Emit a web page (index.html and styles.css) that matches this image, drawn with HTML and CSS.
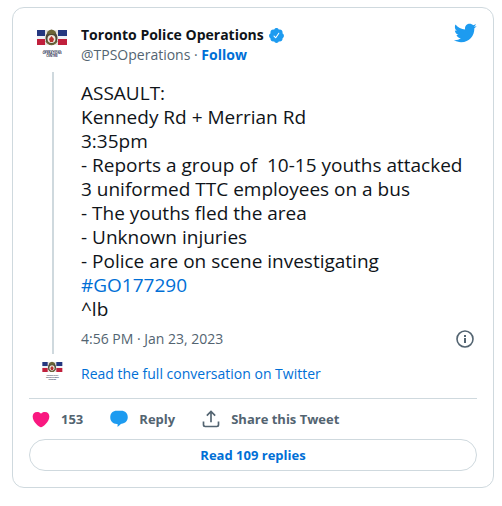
FILE: index.html
```html
<!DOCTYPE html>
<html lang="en">
<head>
  <meta charset="UTF-8" />
  <meta name="viewport" content="width=device-width, initial-scale=1.0" />
  <title>Toronto Police Operations on Twitter</title>
  <link rel="stylesheet" href="styles.css">
</head>
<body>

  <article class="tweet">
    <div class="thread">
      <div class="rail">
        <svg class="avatar" viewBox="0 0 48 48">
          <rect x="8" y="6" width="30" height="6" fill="#24377f" />
          <rect x="8" y="12" width="30" height="3" fill="#eef0f5" />
          <rect x="8" y="15" width="30" height="6" fill="#c0203c" />
          <rect x="16" y="6" width="13" height="15" fill="#e4e2df" />
          <ellipse cx="22.500" cy="14" rx="6" ry="7" fill="#4d4a35" />
          <path d="M18 8 Q22.500 3 27 8 L26 10 H19 Z" fill="#6b6536" />
          <circle cx="22.500" cy="15" r="4" fill="#f0e7dc" />
          <path d="M22.500 12 L25 15 L24 18 H21 L20 15 Z" fill="#b5342f" />
          <path d="M17 17 Q22.500 24 28 17" fill="none" stroke="#6b6536" stroke-width="1.500" />
          <text x="23" y="27" class="emblem-small">TORONTO POLICE</text>
          <text x="23" y="30" class="emblem-text">OPERATIONS</text>
          <text x="23" y="33" class="emblem-text">CENTRE</text>
        </svg>
        <div class="rail-line"></div>
      </div>

      <div class="main">
        <header class="header">
          <div class="author">
            <div class="name">
              <span>Toronto Police Operations</span>
              <svg class="verified" viewBox="0 0 24 24" aria-label="Verified account"><path d="M22.500 12.500c0-1.580-.875-2.950-2.148-3.600.154-.435.238-.905.238-1.400 0-2.210-1.710-3.998-3.818-3.998-.47 0-.92.084-1.336.25C14.818 2.415 13.510 1.500 12 1.500s-2.816.917-3.437 2.250c-.415-.165-.866-.25-1.336-.25-2.110 0-3.818 1.790-3.818 4 0 .494.083.964.237 1.400-1.272.65-2.147 2.018-2.147 3.600 0 1.495.782 2.798 1.942 3.486-.02.17-.032.34-.032.514 0 2.210 1.708 4 3.818 4 .47 0 .92-.086 1.335-.25.62 1.334 1.926 2.250 3.437 2.250 1.512 0 2.818-.916 3.437-2.250.415.163.865.248 1.336.248 2.110 0 3.818-1.790 3.818-4 0-.174-.012-.344-.033-.513 1.158-.687 1.943-1.990 1.943-3.484zm-6.616-3.334l-4.334 6.500c-.145.217-.382.334-.625.334-.143 0-.288-.04-.416-.126l-.115-.094-2.415-2.415c-.293-.293-.293-.768 0-1.060s.768-.294 1.060 0l1.770 1.767 3.825-5.740c.23-.345.696-.436 1.040-.207.346.23.440.696.210 1.040z" /></svg>
            </div>
            <div class="handle">
              <a href="#" class="user">@TPSOperations</a> · <a href="#" class="follow">Follow</a>
            </div>
          </div>
          <a href="#" class="logo" aria-label="Twitter">
            <svg viewBox="0 0 24 24"><path d="M23.643 4.937c-.835.370-1.732.620-2.675.733.962-.576 1.700-1.490 2.048-2.578-.9.534-1.897.922-2.958 1.130-.85-.904-2.060-1.470-3.400-1.470-2.572 0-4.658 2.086-4.658 4.660 0 .364.042.718.120 1.060-3.873-.195-7.304-2.050-9.602-4.868-.4.690-.63 1.490-.63 2.342 0 1.616.823 3.043 2.072 3.878-.764-.025-1.482-.234-2.110-.583v.06c0 2.257 1.605 4.140 3.737 4.568-.392.106-.803.162-1.227.162-.3 0-.593-.028-.877-.082.593 1.850 2.313 3.198 4.352 3.234-1.595 1.250-3.604 1.995-5.786 1.995-.376 0-.747-.022-1.112-.065 2.062 1.323 4.510 2.093 7.140 2.093 8.570 0 13.255-7.098 13.255-13.254 0-.2-.005-.402-.014-.602.910-.658 1.700-1.477 2.323-2.410z" /></svg>
          </a>
        </header>

        <div class="text">ASSAULT:
Kennedy Rd + Merrian Rd
3:35pm
- Reports a group of  10-15 youths attacked 3 uniformed TTC employees on a bus
- The youths fled the area
- Unknown injuries
- Police are on scene investigating
<a href="#">#GO177290</a>
^lb</div>

        <div class="meta">
          <a href="#" class="date">4:56 PM · Jan 23, 2023</a>
          <a href="#" class="info" aria-label="Twitter Ads info and privacy">
            <svg viewBox="0 0 20 20"><circle cx="10" cy="10" r="8" fill="none" stroke="currentColor" stroke-width="1.600" /><rect x="9" y="9" width="2" height="5" /><rect x="9" y="6" width="2" height="2" /></svg>
          </a>
        </div>
      </div>
    </div>

    <div class="conversation">
      <svg class="avatar-small" viewBox="0 0 48 48">
        <rect x="8" y="6" width="30" height="6" fill="#24377f" />
        <rect x="8" y="12" width="30" height="3" fill="#eef0f5" />
        <rect x="8" y="15" width="30" height="6" fill="#c0203c" />
        <rect x="16" y="6" width="13" height="15" fill="#e4e2df" />
        <ellipse cx="22.500" cy="14" rx="6" ry="7" fill="#4d4a35" />
        <path d="M18 8 Q22.500 3 27 8 L26 10 H19 Z" fill="#6b6536" />
        <circle cx="22.500" cy="15" r="4" fill="#f0e7dc" />
        <path d="M22.500 12 L25 15 L24 18 H21 L20 15 Z" fill="#b5342f" />
        <path d="M17 17 Q22.500 24 28 17" fill="none" stroke="#6b6536" stroke-width="1.500" />
        <text x="23" y="27" class="emblem-small">TORONTO POLICE</text>
        <text x="23" y="30" class="emblem-text">OPERATIONS</text>
        <text x="23" y="33" class="emblem-text">CENTRE</text>
      </svg>
      <a href="#">Read the full conversation on Twitter</a>
    </div>

    <div class="actions">
      <button class="action like">
        <svg viewBox="0 0 24 24"><path d="M12 22C9.500 21.500 2 15.500 2 9C2 5.500 4 3.500 7.300 3.500C9.500 3.500 11 4.300 12 5.600C13 4.300 14.500 3.500 16.700 3.500C20 3.500 22 5.500 22 9C22 15.500 14.500 21.500 12 22Z" /></svg>
        <span>153</span>
      </button>
      <button class="action reply">
        <svg viewBox="0 0 24 24"><path d="M9.500 2H14.500C19.500 2 22.500 5 22.500 9.800C22.500 14.200 19.500 17 15 17.800C13.500 18.600 12 20.200 10.300 21.500V18H9.500C4.500 18 1.500 14.700 1.500 10C1.500 5 4.500 2 9.500 2Z" /></svg>
        <span>Reply</span>
      </button>
      <button class="action share">
        <svg viewBox="0 0 24 24"><path d="M3 15v4a2 2 0 0 0 2 2h14a2 2 0 0 0 2-2v-4M12 16V4M7 8l5-5 5 5" /></svg>
        <span>Share this Tweet</span>
      </button>
    </div>

    <button class="replies">Read 109 replies</button>
  </article>

</body>
</html>
```

FILE: styles.css
```css
* {
  box-sizing: border-box;
}

body {
  margin: 0;
  padding: 7px 8px 16px 12px;
  background: #fff;
  color: #0f1419;
  font-family: "Open Sans", "Noto Sans", sans-serif;
  font-size: 14px;
  line-height: 20px;
}

a {
  color: #006fd6;
  text-decoration: none;
}

button {
  font-family: inherit;
  background: none;
  border: none;
  padding: 0;
  cursor: pointer;
}

svg {
  display: block;
  flex: none;
}

.emblem-text,
.emblem-small {
  font-size: 3px;
  line-height: 3px;
  font-weight: bold;
  text-anchor: middle;
  fill: #2b3353;
}

.emblem-small {
  font-size: 2px;
}

.tweet {
  max-width: 550px;
  padding: 16px;
  border: 1px solid #cfd9de;
  border-radius: 12px;
}

.thread {
  display: flex;
  gap: 4px;
}

.rail {
  display: flex;
  flex-direction: column;
  align-items: center;
}

.avatar {
  width: 48px;
  height: 48px;
}

.rail-line {
  flex: 1;
  width: 2px;
  background: #cfd9de;
}

.main {
  flex: 1;
  min-width: 0;
  padding-bottom: 5px;
}

.header {
  display: flex;
  justify-content: space-between;
  padding-top: 1px;
  margin-bottom: 16px;
}

.name {
  display: flex;
  align-items: center;
  gap: 4px;
  font-weight: 700;
}

.verified {
  width: 17px;
  height: 17px;
  fill: #1d9bf0;
}

.handle {
  color: #536471;
}

.user,
.date {
  color: #536471;
}

.follow {
  font-weight: 700;
}

.logo svg {
  width: 24px;
  height: 24px;
  margin-top: -4px;
  fill: #1d9bf0;
}

.text {
  font-size: 19px;
  line-height: 24px;
  white-space: pre-wrap;
}

.meta {
  display: flex;
  justify-content: space-between;
  align-items: center;
  margin-top: 8px;
}

.info svg {
  width: 24px;
  height: 20px;
  color: #536471;
  fill: #536471;
}

.conversation {
  display: flex;
  align-items: center;
  gap: 12px;
  padding: 4px 0 8px 8px;
}

.avatar-small {
  width: 32px;
  height: 32px;
}

.actions {
  display: flex;
  gap: 24px;
  padding: 10px 0;
  border-top: 1px solid #cfd9de;
}

.action {
  display: flex;
  align-items: center;
  gap: 8px;
  color: #536471;
  font-size: 13px;
  font-weight: 700;
  line-height: 20px;
}

.action svg {
  width: 24px;
  height: 20px;
}

.like svg {
  fill: #f91880;
}

.reply svg {
  fill: #1d9bf0;
}

.share svg {
  fill: none;
  stroke: #536471;
  stroke-width: 2;
}

.replies {
  width: 100%;
  height: 32px;
  border: 1px solid #cfd9de;
  border-radius: 16px;
  color: #006fd6;
  font-size: 13px;
  font-weight: 700;
}
```
